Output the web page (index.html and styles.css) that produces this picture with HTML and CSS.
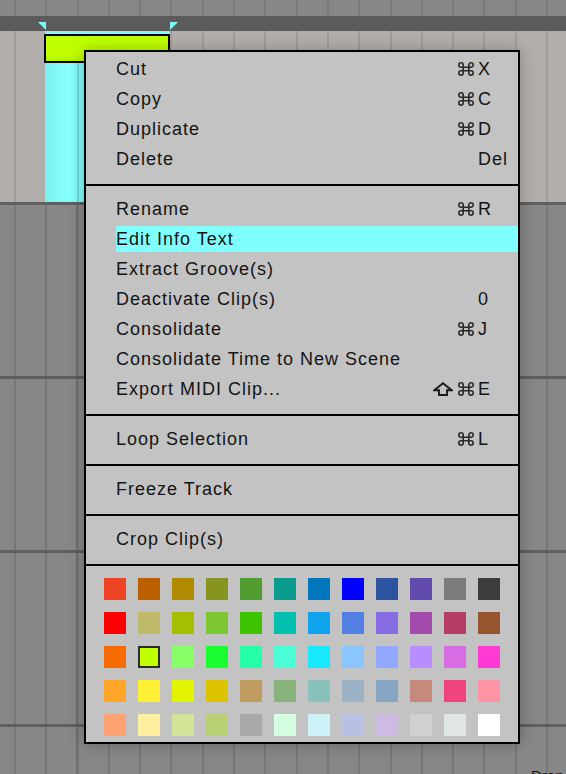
FILE: index.html
```html
<!DOCTYPE html>
<html>
<head>
<meta charset="utf-8">
<link rel="stylesheet" href="styles.css">
</head>
<body>
<div class="arrangement">
  <div class="ruler"></div>
  <div class="loopbar">
    <span class="marker marker-start"></span>
    <span class="marker marker-end"></span>
  </div>
  <div class="track track-selected">
    <div class="clip">
      <div class="clip-top"></div>
      <div class="clip-header"></div>
      <div class="clip-body"></div>
    </div>
  </div>
  <div class="track-sep"></div>
  <div class="track"></div>
  <div class="track-sep"></div>
  <div class="track"></div>
  <div class="track-sep"></div>
  <div class="track"></div>
  <div class="track-sep"></div>
  <div class="track track-last"><span class="drop-label">Drop</span></div>
</div>

<div class="menu">
  <div class="section section-first">
    <div class="item"><span class="label">Cut</span><span class="sc"><span class="mods"><svg class="cmd" viewBox="0 0 16 14"><path d="M5.2 5.2V3A2.2 2.2 0 1 0 3 5.2H13A2.2 2.2 0 1 0 10.8 3V11A2.2 2.2 0 1 0 13 8.8H3A2.2 2.2 0 1 0 5.2 11Z"/></svg></span><span class="key">X</span></span></div>
    <div class="item"><span class="label">Copy</span><span class="sc"><span class="mods"><svg class="cmd" viewBox="0 0 16 14"><path d="M5.2 5.2V3A2.2 2.2 0 1 0 3 5.2H13A2.2 2.2 0 1 0 10.8 3V11A2.2 2.2 0 1 0 13 8.8H3A2.2 2.2 0 1 0 5.2 11Z"/></svg></span><span class="key">C</span></span></div>
    <div class="item"><span class="label">Duplicate</span><span class="sc"><span class="mods"><svg class="cmd" viewBox="0 0 16 14"><path d="M5.2 5.2V3A2.2 2.2 0 1 0 3 5.2H13A2.2 2.2 0 1 0 10.8 3V11A2.2 2.2 0 1 0 13 8.8H3A2.2 2.2 0 1 0 5.2 11Z"/></svg></span><span class="key">D</span></span></div>
    <div class="item"><span class="label">Delete</span><span class="sc"><span class="mods"></span><span class="key">Del</span></span></div>
  </div>
  <div class="section">
    <div class="item"><span class="label">Rename</span><span class="sc"><span class="mods"><svg class="cmd" viewBox="0 0 16 14"><path d="M5.2 5.2V3A2.2 2.2 0 1 0 3 5.2H13A2.2 2.2 0 1 0 10.8 3V11A2.2 2.2 0 1 0 13 8.8H3A2.2 2.2 0 1 0 5.2 11Z"/></svg></span><span class="key">R</span></span></div>
    <div class="item item-hl"><span class="label">Edit Info Text</span></div>
    <div class="item"><span class="label">Extract Groove(s)</span></div>
    <div class="item"><span class="label">Deactivate Clip(s)</span><span class="sc"><span class="mods"></span><span class="key">0</span></span></div>
    <div class="item"><span class="label">Consolidate</span><span class="sc"><span class="mods"><svg class="cmd" viewBox="0 0 16 14"><path d="M5.2 5.2V3A2.2 2.2 0 1 0 3 5.2H13A2.2 2.2 0 1 0 10.8 3V11A2.2 2.2 0 1 0 13 8.8H3A2.2 2.2 0 1 0 5.2 11Z"/></svg></span><span class="key">J</span></span></div>
    <div class="item"><span class="label">Consolidate Time to New Scene</span></div>
    <div class="item"><span class="label">Export MIDI Clip...</span><span class="sc"><span class="mods"><svg class="shift" viewBox="0 0 20 14"><polygon points="10,1.3 18.6,8.2 14,8.2 14,13 6,13 6,8.2 1.4,8.2"/></svg><svg class="cmd" viewBox="0 0 16 14"><path d="M5.2 5.2V3A2.2 2.2 0 1 0 3 5.2H13A2.2 2.2 0 1 0 10.8 3V11A2.2 2.2 0 1 0 13 8.8H3A2.2 2.2 0 1 0 5.2 11Z"/></svg></span><span class="key">E</span></span></div>
  </div>
  <div class="section">
    <div class="item"><span class="label">Loop Selection</span><span class="sc"><span class="mods"><svg class="cmd" viewBox="0 0 16 14"><path d="M5.2 5.2V3A2.2 2.2 0 1 0 3 5.2H13A2.2 2.2 0 1 0 10.8 3V11A2.2 2.2 0 1 0 13 8.8H3A2.2 2.2 0 1 0 5.2 11Z"/></svg></span><span class="key">L</span></span></div>
  </div>
  <div class="section">
    <div class="item"><span class="label">Freeze Track</span></div>
  </div>
  <div class="section">
    <div class="item"><span class="label">Crop Clip(s)</span></div>
  </div>
  <div class="section colors">
    <span class="sw c1"></span><span class="sw c2"></span><span class="sw c3"></span><span class="sw c4"></span><span class="sw c5"></span><span class="sw c6"></span><span class="sw c7"></span><span class="sw c8"></span><span class="sw c9"></span><span class="sw c10"></span><span class="sw c11"></span><span class="sw c12"></span>
    <span class="sw c13"></span><span class="sw c14"></span><span class="sw c15"></span><span class="sw c16"></span><span class="sw c17"></span><span class="sw c18"></span><span class="sw c19"></span><span class="sw c20"></span><span class="sw c21"></span><span class="sw c22"></span><span class="sw c23"></span><span class="sw c24"></span>
    <span class="sw c25"></span><span class="sw c26 selected"></span><span class="sw c27"></span><span class="sw c28"></span><span class="sw c29"></span><span class="sw c30"></span><span class="sw c31"></span><span class="sw c32"></span><span class="sw c33"></span><span class="sw c34"></span><span class="sw c35"></span><span class="sw c36"></span>
    <span class="sw c37"></span><span class="sw c38"></span><span class="sw c39"></span><span class="sw c40"></span><span class="sw c41"></span><span class="sw c42"></span><span class="sw c43"></span><span class="sw c44"></span><span class="sw c45"></span><span class="sw c46"></span><span class="sw c47"></span><span class="sw c48"></span>
    <span class="sw c49"></span><span class="sw c50"></span><span class="sw c51"></span><span class="sw c52"></span><span class="sw c53"></span><span class="sw c54"></span><span class="sw c55"></span><span class="sw c56"></span><span class="sw c57"></span><span class="sw c58"></span><span class="sw c59"></span><span class="sw c60"></span>
  </div>
</div>
</body>
</html>
```

FILE: styles.css
```css
html, body {
  margin: 0;
  padding: 0;
}
body {
  width: 566px;
  height: 774px;
  overflow: hidden;
  position: relative;
  background: #878787;
  font-family: "Liberation Sans", Arial, sans-serif;
}

.arrangement {
  display: flex;
  flex-direction: column;
  height: 774px;
}

.ruler {
  height: 16px;
  flex: none;
  background-color: #878787;
  background-image: repeating-linear-gradient(90deg, transparent 0, transparent 14px, #7a7a7a 14px, #7a7a7a 16px, transparent 16px, transparent 31.3px);
}

.loopbar {
  height: 15px;
  flex: none;
  background: #5b5b5b;
  position: relative;
}
.marker {
  position: absolute;
  top: 6px;
  width: 8px;
  height: 8px;
  background: #7ff9f9;
}
.marker-start {
  left: 38px;
  clip-path: polygon(0 0, 100% 0, 100% 100%);
}
.marker-end {
  left: 170px;
  clip-path: polygon(0 0, 100% 0, 0 100%);
}

.track {
  height: 171px;
  flex: none;
  position: relative;
  background-color: #878787;
  background-image:
    linear-gradient(90deg, transparent 76px, #6f6f6f 76px, #6f6f6f 78px, transparent 78px),
    repeating-linear-gradient(90deg, transparent 0, transparent 14px, #777777 14px, #777777 16px, transparent 16px, transparent 31.3px);
}
.track-selected {
  background-color: #b2aeac;
  background-image: repeating-linear-gradient(90deg, transparent 0, transparent 14px, #a09c9a 14px, #a09c9a 16px, transparent 16px, transparent 31.3px);
}
.track-last {
  flex: 1;
}
.track-sep {
  height: 3px;
  flex: none;
  background: #5f5f5f;
}

.clip {
  position: absolute;
  left: 44px;
  top: 0;
  width: 126px;
  height: 171px;
  display: flex;
  flex-direction: column;
}
.clip-top {
  height: 3px;
  margin-left: 1px;
  background: #7ff9f9;
}
.clip-header {
  height: 25px;
  border: 2px solid #000;
  background: linear-gradient(#c0ff00, #c0ff00 70%, #b4f000);
}
.clip-body {
  flex: 1;
  margin-left: 1px;
  background-color: #80f9f9;
  background-image:
    linear-gradient(90deg, transparent 32px, #6cdcdc 32px, #6cdcdc 34px, transparent 34px),
    linear-gradient(90deg, #7cf0f0, #88ffff 24px, #80fafa 31px);
}

.drop-label {
  position: absolute;
  left: 531px;
  top: 41px;
  font-size: 15px;
  line-height: 16px;
  color: #111;
  white-space: nowrap;
}

/* Context menu */
.menu {
  position: absolute;
  left: 84px;
  top: 50px;
  width: 432px;
  border: 2px solid #000;
  background: #c3c3c3;
  box-shadow: 0 0 14px rgba(0, 0, 0, 0.25);
  color: #141414;
  font-size: 18px;
  letter-spacing: 1px;
}
.section {
  padding: 8px 0 10px;
  border-top: 2px solid #000;
}
.section-first {
  border-top: 0;
  padding: 2px 0 10px;
}
.item {
  height: 30px;
  display: flex;
  align-items: center;
  padding-left: 30px;
  white-space: nowrap;
}
.item-hl {
  height: 26px;
  padding-top: 2px;
  padding-bottom: 2px;
  background: #80ffff;
  background-clip: content-box;
}
.label {
  flex: 1;
}
.sc {
  display: flex;
  align-items: center;
}
.mods {
  display: flex;
  align-items: center;
  gap: 5px;
  padding-right: 4px;
}
.key {
  width: 40px;
}
.cmd {
  width: 16px;
  height: 14px;
  display: block;
  fill: none;
  stroke: #2a2a2a;
  stroke-width: 1.6;
}
.shift {
  width: 20px;
  height: 14px;
  display: block;
  fill: none;
  stroke: #1a1a1a;
  stroke-width: 1.9;
  stroke-linejoin: miter;
}

.colors {
  display: grid;
  grid-template-columns: repeat(12, 22px);
  grid-auto-rows: 22px;
  gap: 12px;
  padding: 12px 18px 6px;
}
.sw {
  display: block;
  width: 22px;
  height: 22px;
  box-sizing: border-box;
}
.sw.selected {
  border: 2px solid #2b2b2b;
}

.c1 { background: #ef4424; }
.c2 { background: #bd6100; }
.c3 { background: #b08b00; }
.c4 { background: #87941f; }
.c5 { background: #529d31; }
.c6 { background: #0b9b8c; }
.c7 { background: #0077bd; }
.c8 { background: #0000ff; }
.c9 { background: #2c53a1; }
.c10 { background: #624bad; }
.c11 { background: #7b7b7b; }
.c12 { background: #3c3c3c; }

.c13 { background: #ff0000; }
.c14 { background: #bfba69; }
.c15 { background: #a6be00; }
.c16 { background: #7bc631; }
.c17 { background: #3dc300; }
.c18 { background: #00bfaf; }
.c19 { background: #10a4ee; }
.c20 { background: #5480e4; }
.c21 { background: #886ce4; }
.c22 { background: #a34bad; }
.c23 { background: #b73d69; }
.c24 { background: #96552f; }

.c25 { background: #f66c03; }
.c26 { background: #bfff00; }
.c27 { background: #87ff67; }
.c28 { background: #1aff2f; }
.c29 { background: #25ffa8; }
.c30 { background: #4dffd7; }
.c31 { background: #19e9ff; }
.c32 { background: #8bc5ff; }
.c33 { background: #92a7ff; }
.c34 { background: #b88dff; }
.c35 { background: #d86ce4; }
.c36 { background: #ff39d4; }

.c37 { background: #ffa529; }
.c38 { background: #ffef34; }
.c39 { background: #e3f400; }
.c40 { background: #dbc300; }
.c41 { background: #bf9b5f; }
.c42 { background: #88b27c; }
.c43 { background: #88c2ba; }
.c44 { background: #9bb3c4; }
.c45 { background: #85a5c2; }
.c46 { background: #c68a7c; }
.c47 { background: #f1437f; }
.c48 { background: #ff94a6; }

.c49 { background: #ffa374; }
.c50 { background: #ffee9f; }
.c51 { background: #d3e498; }
.c52 { background: #bad074; }
.c53 { background: #a9a9a9; }
.c54 { background: #d5ffe1; }
.c55 { background: #cdf2f8; }
.c56 { background: #b9c1e3; }
.c57 { background: #cdbbe4; }
.c58 { background: #d0d0d0; }
.c59 { background: #dfe6e5; }
.c60 { background: #ffffff; }
```
